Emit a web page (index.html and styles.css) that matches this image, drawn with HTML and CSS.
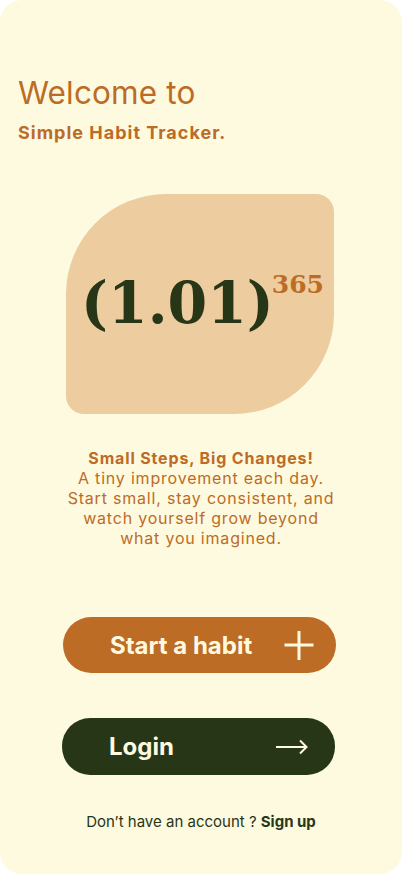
FILE: index.html
```html
<!DOCTYPE html>
<html lang="en">
<head>
<meta charset="utf-8">
<title>Simple Habit Tracker</title>
<link rel="stylesheet" href="styles.css">
</head>
<body>
<main class="screen">
  <header class="intro">
    <h1 class="welcome">Welcome to</h1>
    <h2 class="app-name">Simple Habit Tracker.</h2>
  </header>

  <section class="hero">
    <div class="leaf">
      <span class="formula">(1.01)</span><sup class="power">365</sup>
    </div>
  </section>

  <section class="tagline">
    <p class="tag-title">Small Steps, Big Changes!</p>
    <p class="tag-body">A tiny improvement each day.<br>Start small, stay consistent, and<br>watch yourself grow beyond<br>what you imagined.</p>
  </section>

  <section class="actions">
    <button class="btn btn-start">
      <span class="btn-label">Start a habit</span>
      <svg class="btn-icon" width="30" height="30" viewBox="0 0 30 30"><path d="M15 1v29M0.5 15h29" stroke="#FEFAE0" stroke-width="3" fill="none"/></svg>
    </button>
    <button class="btn btn-login">
      <span class="btn-label">Login</span>
      <svg class="btn-icon arrow" width="32" height="16" viewBox="0 0 32 16"><path d="M0 8h30M24 1.5l6.5 6.5-6.5 6.5" stroke="#FEFAE0" stroke-width="2" fill="none" stroke-linejoin="miter"/></svg>
    </button>
  </section>

  <p class="signup">Don’t have an account ? <a class="signup-link">Sign up</a></p>
</main>
</body>
</html>
```

FILE: styles.css
```css
* { box-sizing: border-box; margin: 0; padding: 0; }
html, body { width: 402px; height: 874px; background: #ffffff; }
body { font-family: Inter, "Noto Sans", sans-serif; }

.screen {
  width: 402px;
  height: 874px;
  background: #FEFAE0;
  border-radius: 22px;
  overflow: hidden;
  display: flex;
  flex-direction: column;
  padding-top: 74px;
}

.intro { padding-left: 18px; }
.welcome {
  font-weight: 400;
  font-size: 31.5px;
  line-height: 38px;
  color: #BC6C25;
  letter-spacing: 0.15px;
}
.app-name {
  margin-top: 10px;
  font-weight: 700;
  font-size: 18px;
  line-height: 22px;
  letter-spacing: 1px;
  color: #BC6C25;
}

.hero {
  margin-top: 50px;
  display: flex;
  padding-left: 66px;
}
.leaf {
  width: 268px;
  height: 220px;
  background: #EDCCA0;
  border-radius: 100px 18px 100px 18px;
  display: flex;
  align-items: center;
  padding-left: 15px;
}
.formula {
  font-family: "DejaVu Serif", "Liberation Serif", serif;
  font-weight: 700;
  font-size: 57px;
  color: #283618;
  line-height: 1;
  margin-top: -4px;
  white-space: nowrap;
}
.power {
  font-family: "DejaVu Serif", serif;
  font-weight: 700;
  font-size: 25px;
  line-height: 1;
  color: #BC6C25;
  align-self: flex-start;
  margin-top: 78px;
  margin-left: -2px;
}

.tagline {
  margin-top: 34px;
  text-align: center;
  color: #BC6C25;
  font-size: 16px;
  line-height: 20px;
}
.tag-title { font-weight: 700; letter-spacing: 0.85px; }
.tag-body { font-weight: 400; letter-spacing: 0.8px; }

.actions {
  margin-top: 69px;
  display: flex;
  flex-direction: column;
  gap: 45px;
  padding-left: 63px;
}
.btn {
  width: 273px;
  height: 56px;
  border: none;
  border-radius: 28px;
  display: flex;
  align-items: center;
  justify-content: space-between;
  padding: 0 22px 0 47px;
  font-family: Inter, "Noto Sans", sans-serif;
  font-weight: 700;
  font-size: 24px;
  color: #FEFAE0;
}
.btn-start { background: #BC6C25; }
.btn-login { background: #283618; margin-left: -1px; padding-right: 27px; height: 57px; }
.btn-icon { display: block; }

.signup {
  margin-top: 37px;
  text-align: center;
  font-size: 15px;
  color: #283618;
}
.signup-link { font-weight: 700; }
```
